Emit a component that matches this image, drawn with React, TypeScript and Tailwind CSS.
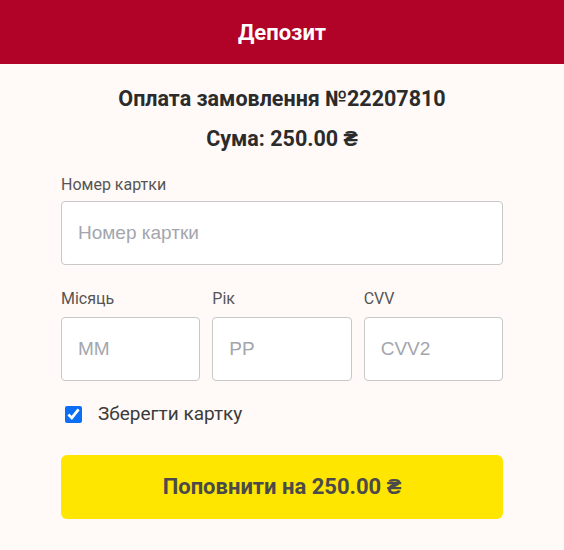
import { useState } from "react";

export default function App() {
  const [save, setSave] = useState(true);

  return (
    <div className="min-h-[550px] bg-[#fffaf7] font-['Roboto',sans-serif] text-[#2b2b2b]">
      <div className="h-16 bg-[#b10228] flex items-center justify-center">
        <h1 className="text-white text-[22px] font-bold">Депозит</h1>
      </div>

      <div className="px-[61px] pt-[21px]">
        <div className="text-center text-[21.5px] font-bold leading-[28px]">
          Оплата замовлення №22207810
        </div>
        <div className="text-center text-[21.5px] font-bold leading-[28px] mt-3">
          Сума: 250.00 ₴
        </div>

        <label className="block mt-[22px] text-[16px] text-[#555] leading-[20px]">
          Номер картки
        </label>
        <input
          placeholder="Номер картки"
          className="mt-[6px] w-full h-16 bg-white border border-[#c8c8c8] rounded px-4 text-[19px] font-['Liberation_Sans',sans-serif] placeholder:text-[#a3a6ad] outline-none"
        />

        <div className="grid grid-cols-3 gap-3 mt-[24px]">
          {[
            ["Місяць", "MM"],
            ["Рік", "PP"],
            ["CVV", "CVV2"],
          ].map(([label, ph]) => (
            <div key={label}>
              <label className="block text-[16px] text-[#555] leading-[20px]">{label}</label>
              <input
                placeholder={ph}
                className="mt-[8px] w-full h-16 bg-white border border-[#c8c8c8] rounded px-4 text-[19px] font-['Liberation_Sans',sans-serif] placeholder:text-[#a3a6ad] outline-none"
              />
            </div>
          ))}
        </div>

        <label className="flex items-center mt-[19px] ml-1 cursor-pointer">
          <input
            type="checkbox"
            checked={save}
            onChange={(e) => setSave(e.target.checked)}
            className="w-[17px] h-[17px] accent-[#0b6ef5]"
          />
          <span className="ml-4 text-[19px] text-[#3b3b3b]">Зберегти картку</span>
        </label>

        <button className="mt-[26px] w-full h-16 rounded-md bg-[#ffe600] text-[22px] font-bold text-[#4a4a4a]">
          Поповнити на 250.00 ₴
        </button>
      </div>
    </div>
  );
}
